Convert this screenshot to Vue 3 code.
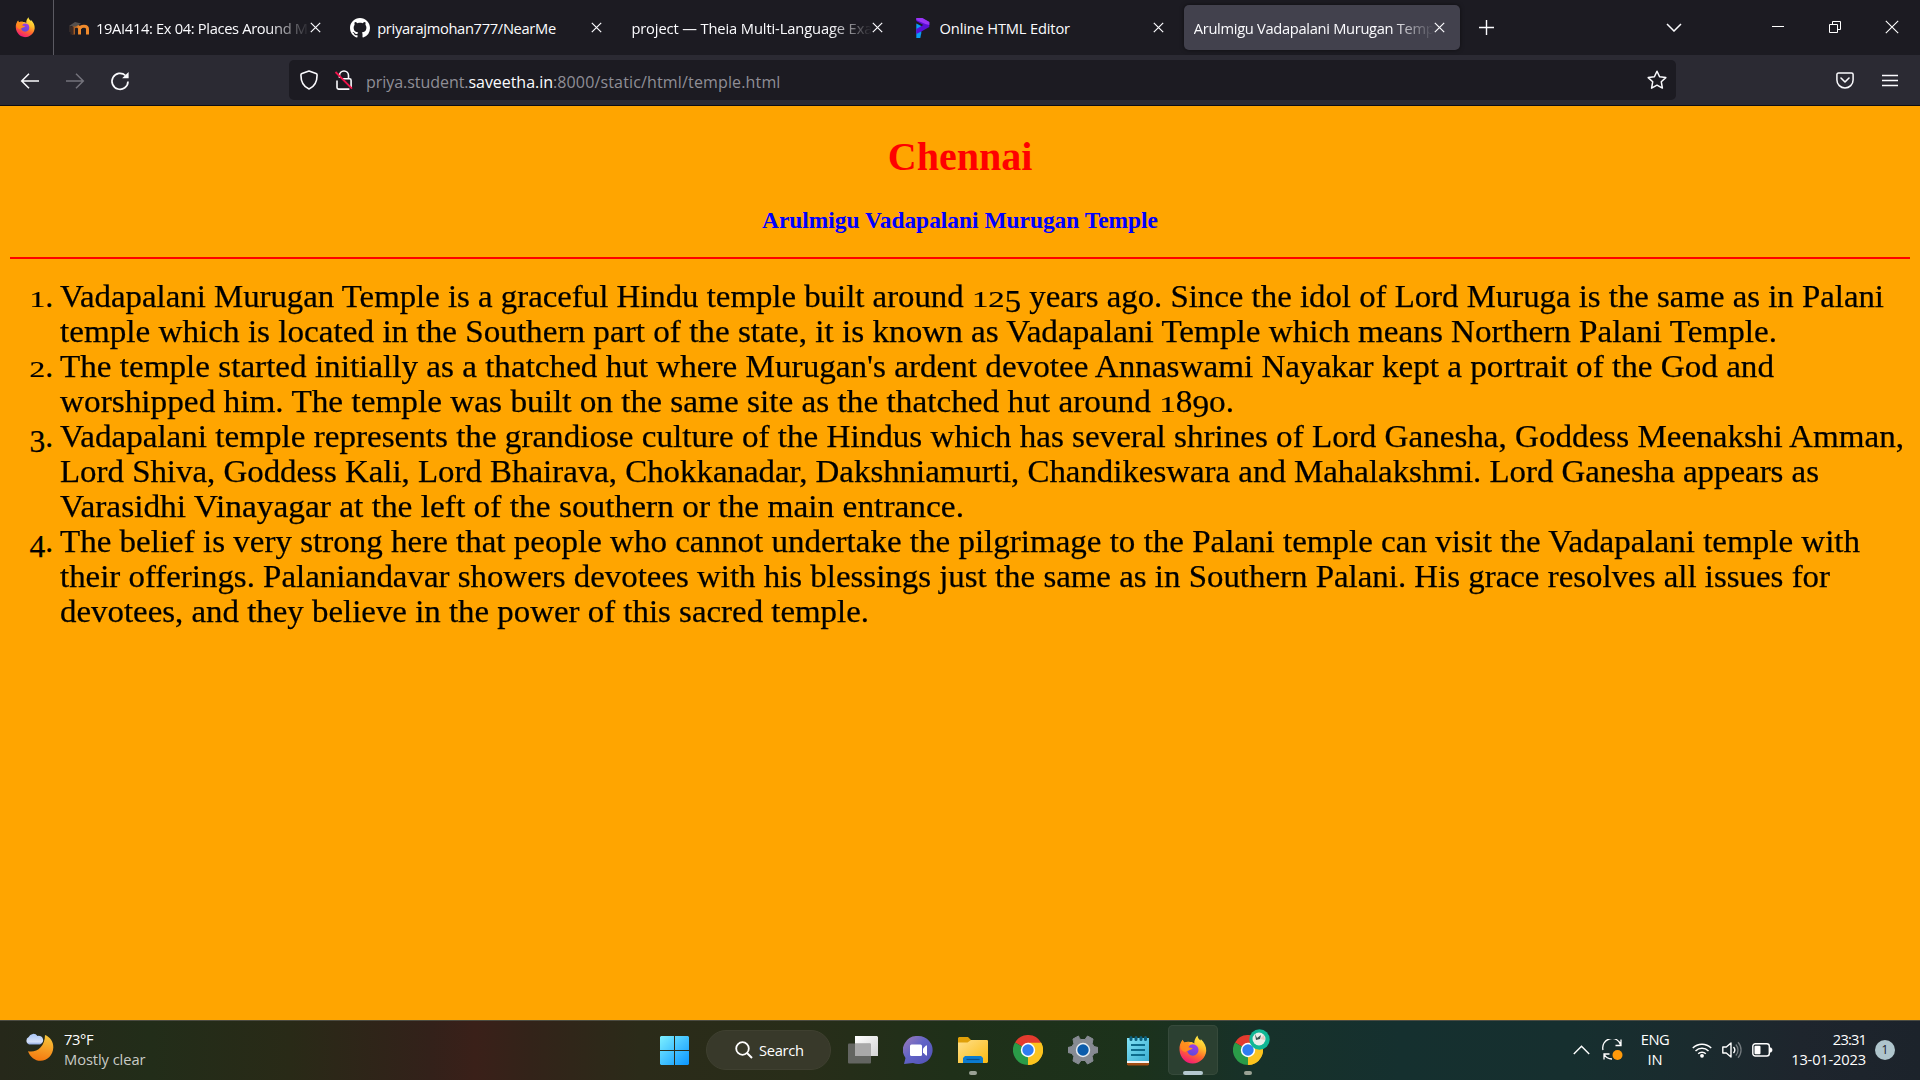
<script setup>
const fit = (el, { value, modifiers }) => {
  const count = el.textContent.trim().length
  const natural = el.getBoundingClientRect().width
  if (modifiers.stretch) {
    el.style.transform = `scaleX(${value / natural})`
  } else {
    el.style.letterSpacing = `${(value - natural) / (count - 1)}px`
  }
}
const vFit = { mounted: fit }

const tabs = [
  { icon: 'moodle', title: '19AI414: Ex 04: Places Around M', width: 212, fade: true },
  { icon: 'github', title: 'priyarajmohan777/NearMe', width: 179 },
  { icon: null, title: 'project — Theia Multi-Language Exa', width: 241, fade: true },
  { icon: 'editor', title: 'Online HTML Editor', width: 130.5 },
  { icon: null, title: 'Arulmigu Vadapalani Murugan Temp', width: 241, fade: true, active: true },
]

const items = [
  [
    ['Vadapalani Murugan Temple is a graceful Hindu temple built around 125 years ago. Since the idol of Lord Muruga is the same as in Palani', 1824],
    ['temple which is located in the Southern part of the state, it is known as Vadapalani Temple which means Northern Palani Temple.', 1717],
  ],
  [
    ["The temple started initially as a thatched hut where Murugan's ardent devotee Annaswami Nayakar kept a portrait of the God and", 1714],
    ['worshipped him. The temple was built on the same site as the thatched hut around 1890.', 1174],
  ],
  [
    ['Vadapalani temple represents the grandiose culture of the Hindus which has several shrines of Lord Ganesha, Goddess Meenakshi Amman,', 1844],
    ['Lord Shiva, Goddess Kali, Lord Bhairava, Chokkanadar, Dakshniamurti, Chandikeswara and Mahalakshmi. Lord Ganesha appears as', 1759],
    ['Varasidhi Vinayagar at the left of the southern or the main entrance.', 904],
  ],
  [
    ['The belief is very strong here that people who cannot undertake the pilgrimage to the Palani temple can visit the Vadapalani temple with', 1800],
    ['their offerings. Palaniandavar showers devotees with his blessings just the same as in Southern Palani. His grace resolves all issues for', 1770],
    ['devotees, and they believe in the power of this sacred temple.', 809],
  ],
]

// Old-style figures: 0-2 sit at x-height, 3-5, 7 and 9 hang below the baseline.
const segments = (text) =>
  text.split(/(\d)/).filter(Boolean).map((t) => ({
    t,
    c: /^[012]$/.test(t) ? 'fig low' : /^[34579]$/.test(t) ? 'fig hang' : '',
  }))
</script>

<template>
  <div class="screen">
    <svg class="defs" width="0" height="0">
      <defs>
        <linearGradient id="ffBody" x1=".75" y1="0" x2=".3" y2="1">
          <stop offset="0" stop-color="#fff04a" /><stop offset=".35" stop-color="#ffbd2a" />
          <stop offset=".62" stop-color="#ff6a2c" /><stop offset="1" stop-color="#f0127e" />
        </linearGradient>
        <linearGradient id="ffCore" x1=".7" y1="0" x2=".3" y2="1">
          <stop offset="0" stop-color="#a33be8" /><stop offset="1" stop-color="#5a4bd8" />
        </linearGradient>
        <linearGradient id="win" x1="0" y1="0" x2="1" y2="1">
          <stop offset="0" stop-color="#7df0ff" /><stop offset="1" stop-color="#0a95ff" />
        </linearGradient>
        <linearGradient id="moon" x1=".6" y1="0" x2=".4" y2="1">
          <stop offset="0" stop-color="#f7c53a" /><stop offset="1" stop-color="#f5780f" />
        </linearGradient>
        <linearGradient id="cloud" x1="0" y1="0" x2="0" y2="1">
          <stop offset="0" stop-color="#a9c6f7" /><stop offset=".75" stop-color="#d5e0f8" /><stop offset="1" stop-color="#8ba6e0" />
        </linearGradient>
        <linearGradient id="chat" x1="0" y1="0" x2="1" y2="1">
          <stop offset="0" stop-color="#a07cb8" /><stop offset=".45" stop-color="#6264c7" /><stop offset="1" stop-color="#5050b4" />
        </linearGradient>
        <linearGradient id="folder" x1="0" y1="0" x2="1" y2="1">
          <stop offset="0" stop-color="#ffe08a" /><stop offset="1" stop-color="#fbb910" />
        </linearGradient>
        <linearGradient id="pad" x1="0" y1="0" x2="1" y2="1">
          <stop offset="0" stop-color="#82e3f5" /><stop offset="1" stop-color="#3aaed2" />
        </linearGradient>
        <linearGradient id="sheet" x1="0" y1="0" x2="1" y2="1">
          <stop offset="0" stop-color="#fff" /><stop offset="1" stop-color="#d4d4d4" />
        </linearGradient>
        <linearGradient id="moodle" gradientUnits="userSpaceOnUse" x1="2" y1="0" x2="18" y2="0">
          <stop offset=".1" stop-color="#8a4a1e" /><stop offset=".5" stop-color="#f08a2c" />
        </linearGradient>
      </defs>
      <symbol id="firefox" viewBox="0 0 28 29">
        <path d="M1 15C.6 11 2 7 4.300 4.800c.3 1.400.8 2 1.500 2.700C8 6.600 10 6.600 11.500 7c1.800-.2 3.300.4 4.300 1.600C15.500 5.500 17 2.500 19 .5c.2 2.500 1.500 3.600 3 5.100.3-.6.300-1.100.2-1.700C26 7.500 28 11.500 27.700 16 27.200 23 21 28.700 14 28.500 7 28.500 1.500 22.500 1 15z" fill="url(#ffBody)" />
        <path d="M2 13C2 9 3 7 4.300 4.800c.3 1.400.8 2 1.500 2.700 2.200-.9 4.500-.7 6.200-.1-1.700 1-2.300 2-2.300 3.200L13 12c-1 3-4.500 2.300-5.500 5C5 17 3 15.500 2 13z" fill="#ff8c1c" opacity=".85" />
        <circle cx="14.300" cy="15" r="5.700" fill="url(#ffCore)" />
        <path d="M6.500 15.500c1.500 1 3 .5 4.500-.5 1.500-.8 2.600-.7 3.200-1.600-.8-1-2.500-1-4-1 .1-1.300.8-2.400 2-3.200-2.500.2-4.200 1.800-4.900 3.300z" fill="#ff8a20" />
      </symbol>
      <symbol id="chrome" viewBox="0 0 30 30">
        <path d="M15 15 2 7.500A15 15 0 0 1 28 7.500z" fill="#e33b2e" />
        <path d="M15 15 28 7.500A15 15 0 0 1 15 30z" fill="#fcc31e" />
        <path d="M15 15v15A15 15 0 0 1 2 7.500z" fill="#2a9b48" />
        <path d="M15 7.800h13.100a15 15 0 0 1-13.100 22.200l6.300-11.500z" fill="#fcc31e" />
        <circle cx="15" cy="15" r="7.200" fill="#fff" /><circle cx="15" cy="15" r="5.700" fill="#2f7df0" />
      </symbol>
    </svg>

    <header class="tabstrip">
      <div class="pinned"><svg width="20" height="20.500"><use href="#firefox" /></svg></div>
      <div class="tabs">
        <div v-for="tab in tabs" :key="tab.title" class="tab" :class="{ selected: tab.active }">
          <svg v-if="tab.icon === 'moodle'" class="favicon" width="20" height="20" viewBox="0 0 20 20">
            <path d="M4.500 16.500V9.500M4.500 10c1-2.500 5.500-2.500 6 .5v6M11 10.500c1-3 7.500-3 7.500.5v5.500" fill="none" stroke="url(#moodle)" stroke-width="3" />
            <path d="M0 8 6 4l6 1.500-5 3z" fill="#55504e" /><path d="M1 8v6" stroke="#4b3a32" stroke-width="1" />
            <path d="M3 9v7.500" stroke="#3c2a24" stroke-width="3" />
          </svg>
          <svg v-else-if="tab.icon === 'github'" class="favicon" width="20" height="20" viewBox="0 0 16 16">
            <path fill="#fff" d="M8 0C3.580 0 0 3.580 0 8c0 3.540 2.290 6.530 5.470 7.590.4.070.55-.17.55-.38 0-.19-.01-.82-.01-1.490-2.010.37-2.530-.49-2.690-.94-.09-.23-.48-.94-.82-1.130-.28-.15-.68-.52-.01-.53.63-.01 1.080.58 1.230.82.72 1.210 1.870.87 2.330.66.070-.52.28-.87.51-1.070-1.780-.2-3.640-.89-3.640-3.950 0-.87.31-1.590.82-2.150-.08-.2-.36-1.020.08-2.120 0 0 .67-.21 2.200.82.64-.18 1.320-.27 2-.27s1.360.09 2 .27c1.530-1.040 2.200-.82 2.200-.82.44 1.100.16 1.920.08 2.120.51.56.82 1.270.82 2.150 0 3.070-1.870 3.750-3.650 3.950.29.25.54.73.54 1.480 0 1.070-.01 1.930-.01 2.200 0 .21.15.46.55.38A8.010 8.010 0 0 0 16 8c0-4.420-3.580-8-8-8z" />
          </svg>
          <svg v-else-if="tab.icon === 'editor'" class="favicon" width="20" height="20" viewBox="0 0 20 20">
            <path d="M3.300 5.500 8.300 8v7l-1 5h-4z" fill="#0a9df5" /><path d="M3.300 0h6l7 4v5l-8 4.500-5 2.500v-5l7-4-7-4z" fill="#5a0fd6" /><path d="M3.300 0h6l7 4v3l-4-1-9-4z" fill="#9a35f5" />
          </svg>
          <span class="title-box" :class="{ fade: tab.fade }"><span v-fit="tab.width" class="title">{{ tab.title }}</span></span>
          <svg class="tab-close" width="11" height="11" viewBox="0 0 11 11"><path d="m.8.8 9.400 9.400m0-9.400L.8 10.200" stroke="#fbfbfe" stroke-width="1.200" /></svg>
        </div>
      </div>
      <svg class="plus" width="15" height="15" viewBox="0 0 15 15"><path d="M7.500 0v15M0 7.500h15" stroke="#fbfbfe" stroke-width="1.400" /></svg>
      <svg class="all-tabs" width="16" height="9" viewBox="0 0 16 9"><path d="m1 1 7 7 7-7" fill="none" stroke="#fbfbfe" stroke-width="1.500" /></svg>
      <div class="window-buttons">
        <svg width="14" height="14" viewBox="0 0 14 14"><path d="M1 6.500h12" stroke="#fff" /></svg>
        <svg width="14" height="14" viewBox="0 0 14 14"><path d="M1.500 4.500h8v8h-8zM4.500 4V1.500h8v8H10" fill="none" stroke="#fff" /></svg>
        <svg width="14" height="14" viewBox="0 0 14 14"><path d="m.8.800 12.400 12.400m0-12.400L.8 13.200" stroke="#fff" stroke-width="1.100" /></svg>
      </div>
    </header>

    <nav class="toolbar">
      <div class="nav-buttons">
        <svg width="20" height="18" viewBox="0 0 20 18"><path d="M19 9H2m7-7.300L1.700 9 9 16.300" fill="none" stroke="#fbfbfe" stroke-width="1.500" /></svg>
        <svg width="20" height="18" viewBox="0 0 20 18"><path d="M1 9h17m-7-7.300L18.300 9 11 16.300" fill="none" stroke="#74737c" stroke-width="1.500" /></svg>
        <svg width="20" height="20" viewBox="0 0 20 20"><path d="M18 10.500A8 8 0 1 1 15.500 4.500" fill="none" stroke="#fbfbfe" stroke-width="1.700" /><path d="M18.600 1v6.300h-6.500z" fill="#fbfbfe" /></svg>
      </div>
      <div class="urlbar">
        <svg class="shield" width="18" height="20" viewBox="0 0 18 20"><path d="m9 1 7 2.500c.8.300 1.100.8 1.100 1.500C17.100 11 15 16.500 9 19 3 16.500.9 11 .9 5c0-.7.3-1.200 1.100-1.500z" fill="none" stroke="#fbfbfe" stroke-width="1.600" stroke-linejoin="round" /></svg>
        <svg class="lock" width="20" height="20" viewBox="0 0 20 20">
          <path d="M5.500 8V5.500a4.500 4.500 0 0 1 9 0V8M3 10.500v7c0 1 .6 1.600 1.600 1.600h10.800M8.500 8.800h7c1 0 1.600.6 1.600 1.600v7" fill="none" stroke="#fbfbfe" stroke-width="1.600" />
          <path d="M1.500 2 18 18.700" stroke="#f0144c" stroke-width="1.800" />
        </svg>
        <div class="url"><span v-fit="102.500" class="title">priya.student.</span><span v-fit="84.500" class="title host">saveetha.in</span><span v-fit="227.500" class="title">:8000/static/html/temple.html</span></div>
        <svg class="star" width="20" height="20" viewBox="0 0 20 20"><path d="m10 1.200 2.600 5.500 6.200.9-4.500 4.200 1.100 6.300L10 15.200l-5.400 2.900 1.100-6.300L1.200 7.600l6.200-.9z" fill="none" stroke="#fbfbfe" stroke-width="1.500" stroke-linejoin="round" /></svg>
      </div>
      <svg class="pocket" width="18" height="17" viewBox="0 0 18 17"><path d="M2.500 1h13c1 0 1.600.6 1.600 1.600V8A8.100 8 0 0 1 .9 8V2.600C.9 1.600 1.500 1 2.500 1z" fill="none" stroke="#fbfbfe" stroke-width="1.500" /><path d="m5 6 4 4 4-4" fill="none" stroke="#fbfbfe" stroke-width="1.600" stroke-linecap="round" stroke-linejoin="round" /></svg>
      <svg class="menu" width="16" height="13" viewBox="0 0 16 13"><path d="M0 1.500h16M0 6.500h16M0 11.500h16" stroke="#fbfbfe" stroke-width="1.400" /></svg>
    </nav>

    <main class="page">
      <h1><span v-fit="144.500" class="title">Chennai</span></h1>
      <h3><span v-fit="396" class="title">Arulmigu Vadapalani Murugan Temple</span></h3>
      <hr />
      <ol>
        <li v-for="(lines, i) in items" :key="i">
          <span class="marker"><span v-for="(s, k) in segments(`${i + 1}.`)" :key="k" :class="s.c">{{ s.t }}</span></span>
          <div class="body">
            <div v-for="line in lines" :key="line[0]" class="line"><span v-fit.stretch="line[1]" class="title"><span v-for="(s, k) in segments(line[0])" :key="k" :class="s.c">{{ s.t }}</span></span></div>
          </div>
        </li>
      </ol>
    </main>

    <footer class="taskbar">
      <div class="weather">
        <svg width="29" height="29" viewBox="0 0 29 29">
          <path d="M20 2c5 2 8.500 6.500 8.300 12.500C28 22 22.500 27.800 15.500 27.800 10 27.800 5 24 3 18.200c8 2 17-4 17-16.200z" fill="url(#moon)" />
          <path d="M4 11.500a4 4 0 0 1-.3-7.400A5 5 0 0 1 12.500 3a4.300 4.300 0 0 1 2.500 8.500z" fill="url(#cloud)" />
        </svg>
        <div class="stack"><span v-fit="29.500" class="title">73°F</span><span v-fit="81.500" class="title dim">Mostly clear</span></div>
      </div>

      <div class="center">
        <svg class="start" width="29" height="29" viewBox="0 0 29 29"><path d="M1 0h13v14H0V1zM15 0h13l1 1v13H15zM0 15h14v14H1l-1-1zM15 15h14v13l-1 1H15z" fill="url(#win)" /></svg>
        <div class="search">
          <svg width="18" height="18" viewBox="0 0 18 18"><circle cx="7.500" cy="7.500" r="6.300" fill="none" stroke="#fff" stroke-width="1.800" /><path d="m12 12 5 5" stroke="#fff" stroke-width="2" /></svg>
          <span v-fit="45" class="title">Search</span>
        </div>
        <div class="app"><svg width="30" height="28" viewBox="0 0 30 28"><path d="M7 0h22l1 1v19H7z" fill="url(#sheet)" /><rect y="7.500" width="23" height="20" rx="1" fill="#6e6e6e" opacity=".85" /><path d="M7 8h16v12H7z" fill="#a9a9a9" /></svg></div>
        <div class="app"><svg width="30" height="29" viewBox="0 0 30 29"><path d="M15 0a14.300 14 0 1 1-5 27L1 28l1.500-6A14.300 14 0 0 1 15 0z" fill="url(#chat)" /><rect x="7" y="8.500" width="12" height="11.500" rx="1.500" fill="#fff" /><path d="m20 12.500 3-3h1v10h-1l-3-3z" fill="#fff" /></svg></div>
        <div class="app running"><svg width="30" height="28" viewBox="0 0 30 28"><path d="M0 9V2l1-1h9l3 3h16l1 1v7z" fill="#e0a008" /><path d="M0 6.500h9.500L13 4h16l1 1v21l-1 1H0z" fill="url(#folder)" /><path d="M5 27v-5l2-2h16l2 2v5z" fill="#0c7bd0" /><path d="M8.500 23.500h13" stroke="#0b4f8c" stroke-width="1.200" /></svg></div>
        <div class="app"><svg width="30" height="30"><use href="#chrome" /></svg></div>
        <div class="app"><svg width="30" height="30" viewBox="0 0 30 30"><path d="M11.500 3.500 10.500 1 5 4l.8 4.500L4 11.500l-4 1v5l4 1 1.800 3L5 26l5.500 3 2.500-3.500h4l2.500 3.500 5.500-3-.8-4.500 1.800-3 4-1v-5l-4-1-1.800-3L25 4l-5.500-3L17 4.500h-4z" fill="#868a92" stroke="#868a92" stroke-linejoin="round" /><circle cx="15" cy="15" r="7.200" fill="#e8edf2" /><circle cx="15" cy="15" r="5.700" fill="#0b5cab" /></svg></div>
        <div class="app"><svg width="22" height="31" viewBox="0 0 22 31"><path d="M0 24h22v5.500l-1 1H1l-1-1z" fill="#a34d13" /><path d="M0 24h22v4H0z" fill="#f3f3f3" /><path d="M0 3h22v23H0z" fill="url(#pad)" /><path d="M4 10h14M4 15h14M4 20h14" stroke="#0d6c8c" stroke-width="1.800" /><path d="M4 2.500v2M9 2.500v2M14 2.500v2M18.500 2.500v2" stroke="#0b5f7c" stroke-width="3" stroke-linecap="round" /></svg></div>
        <div class="app active"><svg width="29" height="29"><use href="#firefox" /></svg></div>
        <div class="app running">
          <svg width="30" height="30"><use href="#chrome" /></svg>
          <svg class="profile" width="21" height="21" viewBox="0 0 21 21"><circle cx="10.500" cy="10.500" r="10.200" fill="#0fb795" /><circle cx="10" cy="10" r="6.500" fill="#e8eee8" /><path d="m6 5 2 4 4-3-1 4-4 1z" fill="#33514c" /><path d="m11 10 4-4 1 5z" fill="#e4c8c0" /></svg>
        </div>
      </div>

      <div class="tray">
        <svg class="up" width="17" height="10" viewBox="0 0 17 10"><path d="M.8 9 8.500 1.200 16.200 9" fill="none" stroke="#fff" stroke-width="1.400" /></svg>
        <svg class="sync" width="21" height="22" viewBox="0 0 21 22"><path d="M1 11A9.200 9.200 0 0 1 19 6.500M19 .5v6h-5.500M2 20.500v-5.500h5.500M2 15c1.500 3 4.500 5 8 5" fill="none" stroke="#fff" stroke-width="1.300" /><circle cx="15.500" cy="16" r="5" fill="#ff9a0a" /></svg>
        <div class="stack lang"><span v-fit="29" class="title">ENG</span><span v-fit="15" class="title">IN</span></div>
        <svg class="wifi" width="20" height="16" viewBox="0 0 20 16"><path d="M.8 6a13 13 0 0 1 18.400 0M3.500 9a9.200 9.200 0 0 1 13 0M6.200 11.800a5.400 5.400 0 0 1 7.600 0" fill="none" stroke="#fff" stroke-width="1.500" /><circle cx="10" cy="13.800" r="1.900" fill="#fff" /></svg>
        <svg class="volume" width="21" height="18" viewBox="0 0 21 18"><path d="M.8 6h3.500L9 2v14l-4.700-4H.8z" fill="none" stroke="#fff" stroke-width="1.400" stroke-linejoin="round" /><path d="M11.500 6a4.500 4.500 0 0 1 0 6" fill="none" stroke="#fff" stroke-width="1.400" /><path d="M13.800 3.500a8 8 0 0 1 0 11M16 1.200a11.500 11.500 0 0 1 0 15.600" fill="none" stroke="#737a7e" stroke-width="1.300" /></svg>
        <svg class="battery" width="21" height="14" viewBox="0 0 21 14"><rect x=".8" y=".8" width="16.500" height="12.200" rx="2.500" fill="none" stroke="#fff" stroke-width="1.400" /><rect x="2.500" y="2.700" width="6" height="8.500" rx="1" fill="#fff" /><path d="M18 4.500h1l1.300 1.500v2L19 9.500h-1z" fill="#fff" /></svg>
        <div class="stack clock"><span v-fit="34" class="title">23:31</span><span v-fit="75" class="title">13-01-2023</span></div>
        <span class="count">1</span>
      </div>
    </footer>
  </div>
</template>

<style>
body { margin: 0; background: #ffa500; }
</style>

<style scoped>
.screen { width: 1920px; height: 1080px; overflow: hidden; display: flex; flex-direction: column; font-family: "Open Sans", "Noto Sans", sans-serif; font-size: 14.700px; color: #fbfbfe; }
.screen svg { display: block; flex: none; }
.screen svg.defs { position: absolute; }
.title { display: inline-block; white-space: pre; }

.tabstrip { flex: none; height: 55px; background: #1c1b22; display: flex; align-items: center; }
.pinned { width: 54px; height: 55px; box-sizing: border-box; padding: 17px 0 0 15px; border-right: 1px solid #5b5a62; }
.tabs { display: flex; gap: 5.200px; margin-left: 5px; }
.tab { width: 276px; height: 45px; box-sizing: border-box; padding: 0 14.500px 0 10px; border-radius: 5px; display: flex; align-items: center; }
.tab.selected { background: #42414d; box-shadow: 0 0 4px rgba(0, 0, 0, .5); }
.favicon { margin-right: 7px; }
.title-box { flex: 1; min-width: 0; overflow: hidden; line-height: 22px; height: 22px; padding-top: 1px; }
.title-box.fade { mask-image: linear-gradient(to right, #000 calc(100% - 42px), transparent); }
.tab-close { margin-left: 0; }
.plus { margin-left: 19px; }
.all-tabs { margin-left: 172px; margin-top: -1px; }
.window-buttons { margin-left: 89px; display: flex; gap: 43px; margin-top: -1px; }

.toolbar { flex: none; height: 51px; box-sizing: border-box; background: #2b2a33; border-bottom: 1px solid #0e0d12; display: flex; align-items: center; }
.nav-buttons { display: flex; align-items: center; gap: 25px; width: 269px; padding-left: 20px; padding-top: 1px; }
.urlbar { width: 1387px; height: 40px; box-sizing: border-box; border-radius: 5px; background: #1c1b22; display: flex; align-items: center; padding: 0 9px 0 11px; }
.lock { margin-left: 16px; }
.url { margin-left: 12px; padding-top: 3px; flex: 1; display: flex; font-size: 16px; line-height: 22px; color: #8f8e96; white-space: nowrap; }
.url .title { flex: none; }
.host { color: #fbfbfe; }
.pocket { margin-left: 160px; }
.menu { margin-left: 28px; }

.page { flex: 1; background: #ffa500; color: #000; font-family: "Liberation Serif", serif; padding: 29px 10px 0; text-align: center; }
h1 { margin: 0; font-size: 40px; line-height: 44px; color: #f00; }
h3 { margin: 28px 0 0; font-size: 23.400px; line-height: 26px; color: #00f; }
hr { margin: 24px 0 20px; border: 0; height: 2px; background: #f00; }
ol { margin: 0; padding: 0; list-style: none; text-align: left; font-family: Georgia, "Liberation Serif", serif; font-size: 31.500px; line-height: 35px; -webkit-text-stroke: .25px #000; }
li { display: flex; }
.marker { width: 43px; margin-right: 7px; text-align: right; }
.line { height: 35px; white-space: nowrap; }
.line .title { transform-origin: 0 50%; }
.fig { display: inline-block; transform-origin: 50% 28px; }
.low { transform: scaleY(.72); }
.hang { transform: translateY(5px); }

.taskbar { flex: none; height: 60px; box-sizing: border-box; border-top: 1px solid #4c4c42; display: flex; color: #fff; background: linear-gradient(90deg, #26281a 0, #222d19 150px, #292a17 290px, #33211a 430px, #3a2019 475px, #332319 530px, #2b2b19 640px, #282d19 800px, #1f3019 950px, #1c321b 1130px, #17312a 1260px, #15302f 1400px, #162f2f 1570px, #1a2b2e 1690px, #1e252d 1800px, #1c232b 1920px); }
.stack { display: flex; flex-direction: column; line-height: 20px; padding-top: 8px; align-items: flex-start; }
.weather { display: flex; width: 635px; box-sizing: border-box; padding-left: 24.500px; gap: 10.500px; flex: none; width: 660px; }
.weather > svg { margin-top: 12px; }
.dim { color: #c8cac5; }
.center { display: flex; align-items: center; height: 58px; }
.start { margin-right: 17px; }
.search { width: 125px; height: 40px; box-sizing: border-box; border: 1px solid #3f4030; border-radius: 20px; background: #38392a; display: flex; align-items: center; padding-left: 28px; gap: 6px; margin-right: 7px; }
.app { position: relative; width: 50px; height: 50px; box-sizing: border-box; margin-right: 5px; border-radius: 5px; display: flex; align-items: center; justify-content: center; }
.app.active { background: #2b4031; box-shadow: inset 0 0 0 1px #364a3b; }
.app.active svg { margin-right: 1px; margin-bottom: 2px; }
.app.running::after, .app.active::after { content: ""; position: absolute; bottom: 0; left: 50%; width: 8px; height: 4px; margin-left: -4px; border-radius: 2px; background: #9aa295; }
.app.active::after { width: 20px; margin-left: -10px; background: #b4c8cf; }
.profile { position: absolute; left: 26px; top: 4px; }
.tray { display: flex; margin-left: auto; align-items: center; height: 58px; padding-right: 25px; }
.tray .stack { padding-top: 0; margin-top: -2px; }
.sync { margin-left: 12px; }
.lang { align-items: center; margin-left: 18px; width: 28px; }
.wifi { margin-left: 23px; }
.volume { margin-left: 10px; }
.battery { margin-left: 9px; }
.clock { align-items: flex-end; margin-left: 18px; width: 75px; }
.count { width: 20px; height: 20px; border-radius: 50%; margin-left: 9px; background: #afc5cc; color: #1c232b; font-size: 12px; line-height: 20px; text-align: center; }
</style>
